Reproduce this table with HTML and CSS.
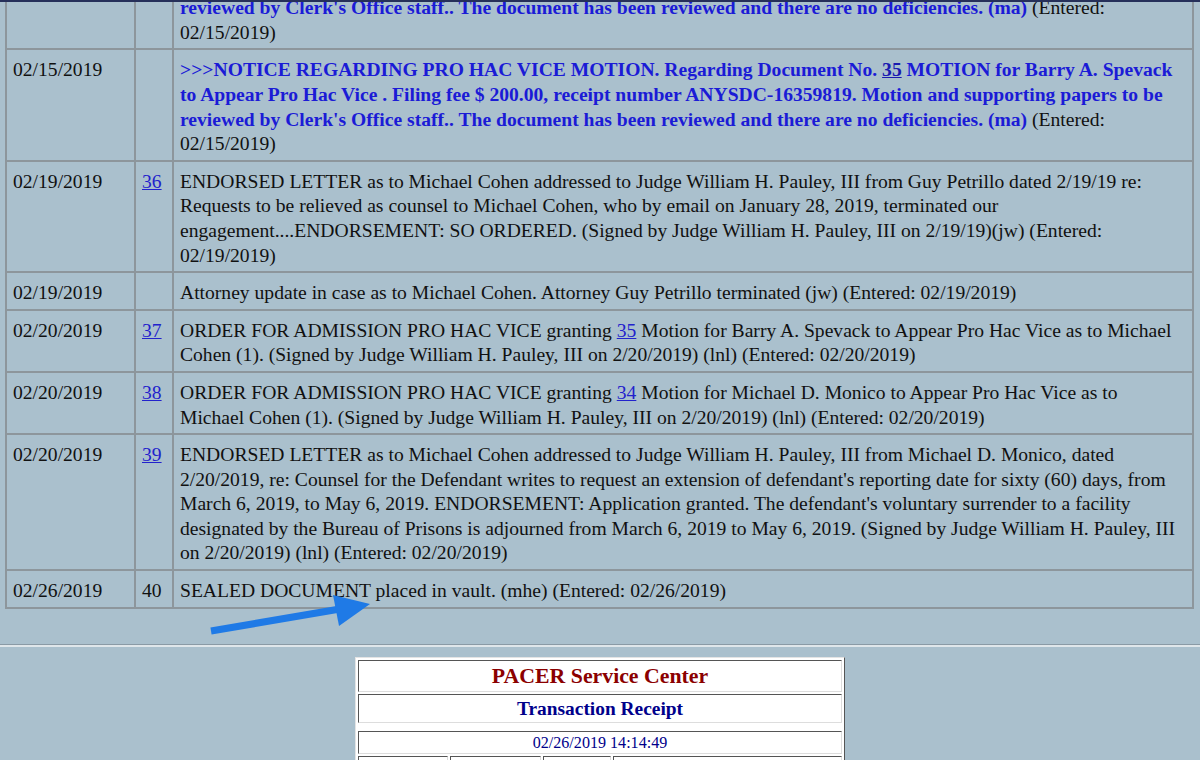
FILE: index.html
```html
<!DOCTYPE html>
<html lang="en">

<head>
    <meta charset="UTF-8">
    <meta name="viewport" content="width=device-width, initial-scale=1.0">
    <title>Docket Report</title>
    <link rel="stylesheet" href="styles.css">
</head>

<body>

    <div class="top-edge"></div>

    <div class="docket-wrap">
        <table class="docket">
            <colgroup>
                <col class="col-date">
                <col class="col-num">
                <col class="col-text">
            </colgroup>
            <tr>
                <td>02/15/2019</td>
                <td></td>
                <td><span class="notice">&gt;&gt;&gt;NOTICE REGARDING PRO HAC VICE MOTION. Regarding Document No. <a href="#">34</a> MOTION for Michael D. Monico<br>to Appear Pro Hac Vice . Filing fee $ 200.00, receipt number ANYSDC-16359735. Motion and supporting papers to be<br>reviewed by Clerk's Office staff.. The document has been reviewed and there are no deficiencies. (ma)</span> (Entered:<br>02/15/2019)</td>
            </tr>
            <tr>
                <td>02/15/2019</td>
                <td></td>
                <td><span class="notice">&gt;&gt;&gt;NOTICE REGARDING PRO HAC VICE MOTION. Regarding Document No. <a href="#">35</a> MOTION for Barry A. Spevack<br>to Appear Pro Hac Vice . Filing fee $ 200.00, receipt number ANYSDC-16359819. Motion and supporting papers to be<br>reviewed by Clerk's Office staff.. The document has been reviewed and there are no deficiencies. (ma)</span> (Entered:<br>02/15/2019)</td>
            </tr>
            <tr>
                <td>02/19/2019</td>
                <td><a href="#">36</a></td>
                <td>ENDORSED LETTER as to Michael Cohen addressed to Judge William H. Pauley, III from Guy Petrillo dated 2/19/19 re:<br>Requests to be relieved as counsel to Michael Cohen, who by email on January 28, 2019, terminated our<br>engagement....ENDORSEMENT: SO ORDERED. (Signed by Judge William H. Pauley, III on 2/19/19)(jw) (Entered:<br>02/19/2019)</td>
            </tr>
            <tr>
                <td>02/19/2019</td>
                <td></td>
                <td>Attorney update in case as to Michael Cohen. Attorney Guy Petrillo terminated (jw) (Entered: 02/19/2019)</td>
            </tr>
            <tr>
                <td>02/20/2019</td>
                <td><a href="#">37</a></td>
                <td>ORDER FOR ADMISSION PRO HAC VICE granting <a href="#">35</a> Motion for Barry A. Spevack to Appear Pro Hac Vice as to Michael<br>Cohen (1). (Signed by Judge William H. Pauley, III on 2/20/2019) (lnl) (Entered: 02/20/2019)</td>
            </tr>
            <tr>
                <td>02/20/2019</td>
                <td><a href="#">38</a></td>
                <td>ORDER FOR ADMISSION PRO HAC VICE granting <a href="#">34</a> Motion for Michael D. Monico to Appear Pro Hac Vice as to<br>Michael Cohen (1). (Signed by Judge William H. Pauley, III on 2/20/2019) (lnl) (Entered: 02/20/2019)</td>
            </tr>
            <tr>
                <td>02/20/2019</td>
                <td><a href="#">39</a></td>
                <td>ENDORSED LETTER as to Michael Cohen addressed to Judge William H. Pauley, III from Michael D. Monico, dated<br>2/20/2019, re: Counsel for the Defendant writes to request an extension of defendant's reporting date for sixty (60) days, from<br>March 6, 2019, to May 6, 2019. ENDORSEMENT: Application granted. The defendant's voluntary surrender to a facility<br>designated by the Bureau of Prisons is adjourned from March 6, 2019 to May 6, 2019. (Signed by Judge William H. Pauley, III<br>on 2/20/2019) (lnl) (Entered: 02/20/2019)</td>
            </tr>
            <tr>
                <td>02/26/2019</td>
                <td>40</td>
                <td>SEALED DOCUMENT placed in vault. (mhe) (Entered: 02/26/2019)</td>
            </tr>
        </table>
    </div>

    <hr class="divider">

    <table class="receipt">
        <tr>
            <th colspan="4" class="receipt-title">PACER Service Center</th>
        </tr>
        <tr>
            <th colspan="4" class="receipt-sub">Transaction Receipt</th>
        </tr>
        <tr class="spacer">
            <td colspan="4"></td>
        </tr>
        <tr>
            <td colspan="4" class="receipt-date">02/26/2019 14:14:49</td>
        </tr>
        <tr class="receipt-row">
            <th class="login-label">PACER Login:</th>
            <td class="login-value">&nbsp;</td>
            <th class="client-label">Client Code:</th>
            <td>&nbsp;</td>
        </tr>
    </table>

    <svg class="arrow" width="1200" height="760" viewBox="0 0 1200 760">
        <line x1="211" y1="631" x2="340" y2="609" stroke="#1f7ae6" stroke-width="7"/>
        <polygon points="370,604 333,595 339,626" fill="#1f7ae6"/>
    </svg>

</body>

</html>
```

FILE: styles.css
```css
* {
    box-sizing: border-box;
}

body {
    margin: 0;
    background-color: #aac0cd;
    font-family: "Liberation Serif", "Times New Roman", serif;
    font-size: 19.6px;
    color: #111;
}

.top-edge {
    height: 2px;
    background-color: #26305a;
}

/* docket table, scrolled so the first entry is cut at the top */
.docket-wrap {
    overflow: hidden;
    padding-left: 5px;
}

.docket {
    width: 1189px;
    border-collapse: collapse;
    table-layout: fixed;
    margin-top: -65px;
}

.col-date {
    width: 129px;
}

.col-num {
    width: 38px;
}

.docket td {
    border: 2px solid #8d969c;
    padding: 8px 6px 3px;
    line-height: 24.6px;
    vertical-align: top;
    white-space: nowrap;
}

.docket a {
    color: #2222cc;
}

.notice {
    color: #1b1bd6;
    font-weight: bold;
}

.notice a {
    color: #1b1bb0;
}

.divider {
    margin: 35px 0 0;
    height: 0;
    border: 0;
    border-top: 1px solid #8a9aa5;
    border-bottom: 2px solid #dfe6ea;
}

/* receipt */
.receipt {
    width: 490px;
    margin: 10px auto 0;
    background-color: #fff;
    border: 1px solid;
    border-color: #e4e4e4 #555 #555 #e4e4e4;
    border-spacing: 2px;
}

.receipt th,
.receipt td {
    border: 1px solid;
    border-color: #555 #ddd #ddd #555;
    padding: 1px;
}

.receipt-title {
    color: #8b0000;
    font-size: 21.8px;
    line-height: 28px;
}

.receipt-sub {
    color: #00008b;
    font-size: 19.4px;
    line-height: 25px;
}

.receipt .spacer td {
    border: 0;
    padding: 0;
    height: 4px;
}

.receipt-date {
    color: #00008b;
    font-size: 16.1px;
    line-height: 19px;
    text-align: center;
}

.receipt-row th {
    color: #00008b;
    font-size: 16.1px;
    text-align: left;
}

.login-label {
    width: 90px;
}

.login-value {
    width: 91px;
}

.client-label {
    width: 68px;
}

.arrow {
    position: absolute;
    left: 0;
    top: 0;
    pointer-events: none;
}
```
